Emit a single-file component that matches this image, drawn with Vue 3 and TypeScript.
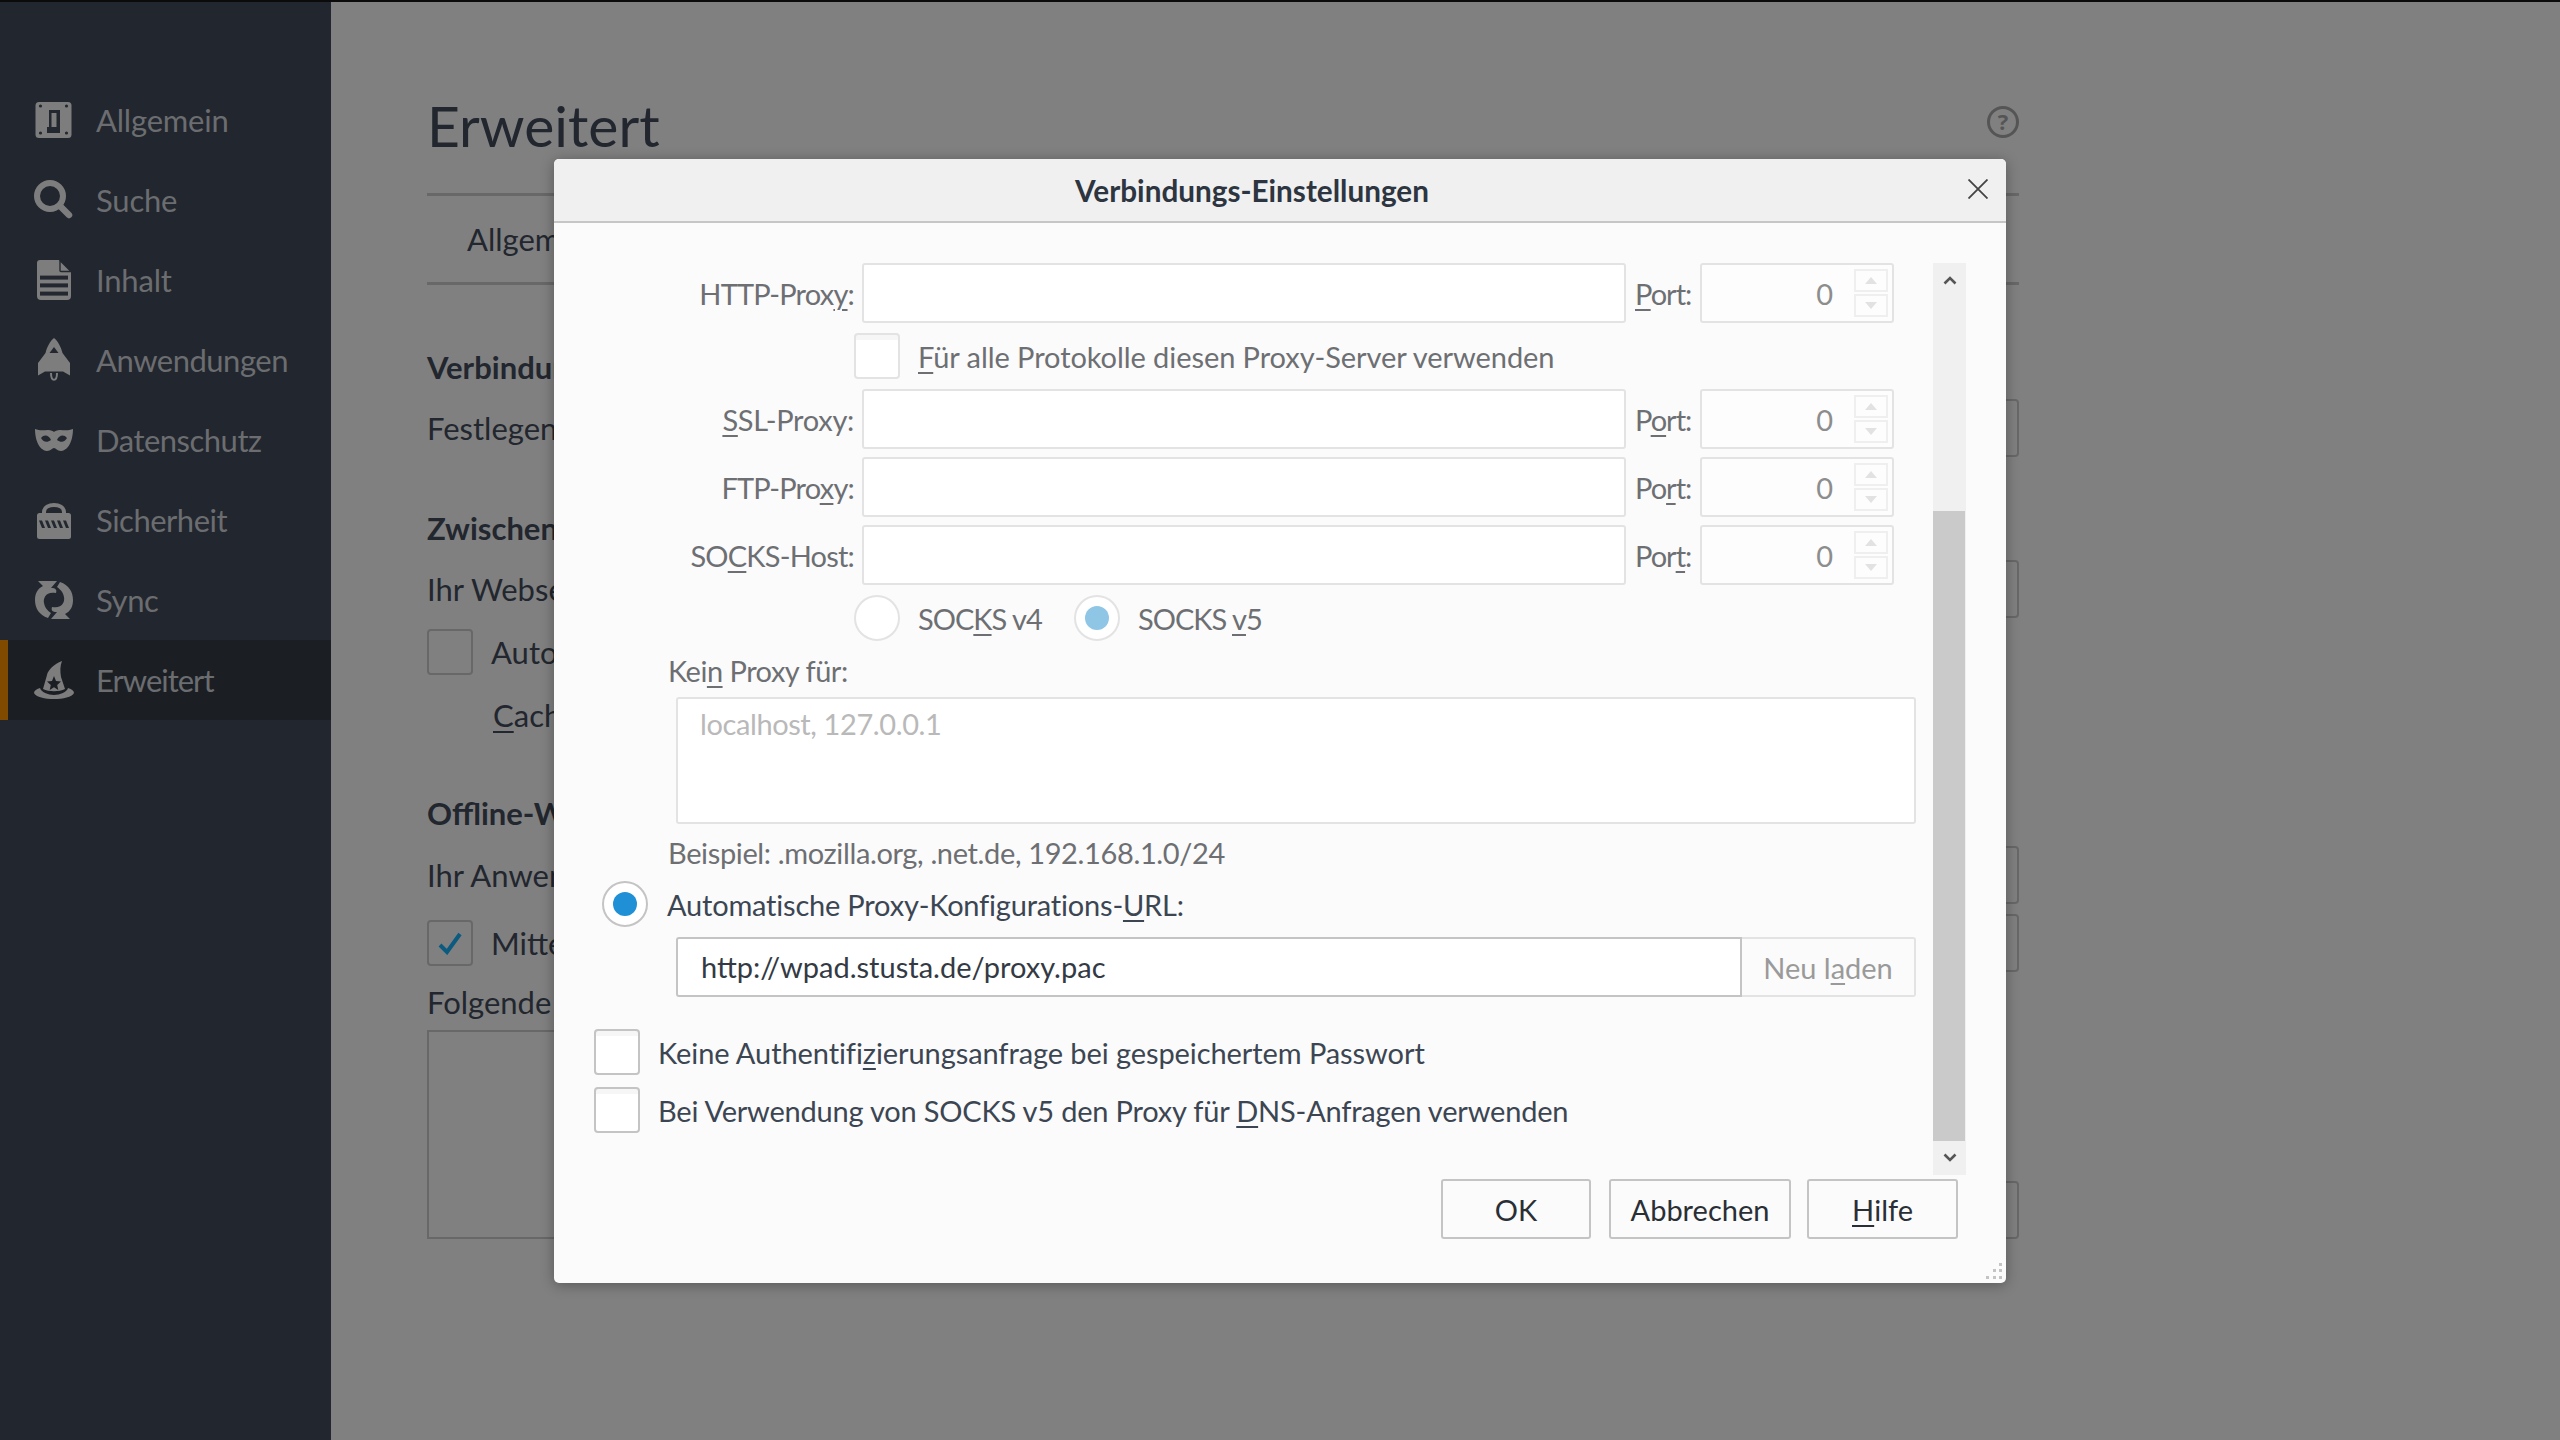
<script setup lang="ts">
const nav: { id: string; label: string; active?: boolean }[] = [
  { id: 'general', label: 'Allgemein' },
  { id: 'search', label: 'Suche' },
  { id: 'content', label: 'Inhalt' },
  { id: 'apps', label: 'Anwendungen' },
  { id: 'privacy', label: 'Datenschutz' },
  { id: 'security', label: 'Sicherheit' },
  { id: 'sync', label: 'Sync' },
  { id: 'advanced', label: 'Erweitert', active: true },
]
</script>

<template>
  <div class="page">
    <aside class="sidebar">
      <div v-for="n in nav" :key="n.id" class="nav" :class="[n.id, { active: n.active }]">
        <svg class="nav-icon" viewBox="0 0 40 40" width="40" height="40">
          <template v-if="n.id === 'general'">
            <rect x="1.5" y="2" width="36" height="36" rx="3.5" fill="#7d7d7d" />
            <g fill="#23272f"><circle cx="6.5" cy="6" r="1.6" /><circle cx="32.5" cy="6" r="1.6" /><circle cx="6.5" cy="33" r="1.6" /><circle cx="32.5" cy="33" r="1.6" /></g>
            <path d="M13 10H26V33H13V27H15V10Z" fill="#23272f" />
            <rect x="17.5" y="13" width="5" height="14" fill="#7d7d7d" />
          </template>
          <template v-else-if="n.id === 'search'">
            <circle cx="16" cy="16" r="13" fill="none" stroke="#7d7d7d" stroke-width="6" />
            <path d="M26 26L35 35" fill="none" stroke="#7d7d7d" stroke-width="6.5" stroke-linecap="round" />
          </template>
          <template v-else-if="n.id === 'content'">
            <path d="M6 0H25L37 12V36Q37 40 33 40H7Q3 40 3 36V3Q3 0 6 0Z" fill="#7d7d7d" />
            <path d="M26 0.5L37 11.5H27Q26 11.5 26 10.5Z" fill="#7d7d7d" stroke="#23272f" stroke-width="1.4" />
            <g fill="#23272f"><rect x="6" y="15.6" width="28" height="4" /><rect x="6" y="23.4" width="28" height="4" /><rect x="6" y="31.6" width="28" height="4" /></g>
          </template>
          <template v-else-if="n.id === 'apps'">
            <path d="M20 -2C24 1 27 7 28.500 13L36 23V35.500L29 31.500H11L4 35.500V23L11.500 13C13 7 16 1 20 -2Z" fill="#7d7d7d" />
            <path d="M20 7L24.500 13H15.500Z" fill="#23272f" />
            <path d="M17 33C17 42 23 42 23 33" fill="none" stroke="#7d7d7d" stroke-width="2" />
          </template>
          <template v-else-if="n.id === 'privacy'">
            <path d="M1 9C6 11 10 10 14 10C17 10 19 11 20 12C21 11 23 10 26 10C30 10 34 11 39 9C39 18 36 30 27 31C23 31 22 28 20 28C18 28 17 31 13 31C4 30 1 18 1 9Z" fill="#7d7d7d" />
            <path d="M7 18C10 14 15 15 17 20C13 23 9 22 7 18ZM33 18C30 14 25 15 23 20C27 23 31 22 33 18Z" fill="#23272f" />
          </template>
          <template v-else-if="n.id === 'security'">
            <path d="M10 15V12C10 2.500 30 2.500 30 12V15" fill="none" stroke="#7d7d7d" stroke-width="4" />
            <rect x="3" y="13" width="34" height="26" rx="2.500" fill="#7d7d7d" />
            <g fill="#23272f"><path d="M5 20.500H8L11 28H8Z" /><path d="M11 20.500H14L17 28H14Z" /><path d="M17 20.500H20L23 28H20Z" /><path d="M23 20.500H26L29 28H26Z" /><path d="M29 20.500H32L35 28H32Z" /></g>
          </template>
          <template v-else-if="n.id === 'sync'">
            <g fill="#7d7d7d">
              <path d="M4 1H23L17 8C22 8 23 10 22 13C12 11 9 18 10 23C11 28 13 30 17 33L14 38C5 35 1 28 1 20C1 14 3 9 9 6Z" />
              <path d="M4 1H23L17 8C22 8 23 10 22 13C12 11 9 18 10 23C11 28 13 30 17 33L14 38C5 35 1 28 1 20C1 14 3 9 9 6Z" transform="rotate(180 20 20)" />
            </g>
          </template>
          <template v-else>
            <path d="M28 1C20 4 14 10 13 15L9 29C15 32 25 32 31 29L27 17C26 11 26 6 28 1Z" fill="#7d7d7d" />
            <path d="M6 28C2 29 0 31 0 33C2 37 11 39 20 39C29 39 38 37 40 33C40 31 38 29 34 28C33 32 26 35 20 35C14 35 7 32 6 28Z" fill="#7d7d7d" />
            <path d="M20 16L22 21L27 21.500L23.200 25L24.300 30L20 27.300L15.700 30L16.800 25L13 21.500L18 21Z" fill="#1b1f24" />
          </template>
        </svg>
        <span>{{ n.label }}</span>
      </div>
    </aside>

    <main class="main">
      <div class="h-row">
        <h1>Erweitert</h1>
        <svg class="help" viewBox="0 0 32 32" width="32" height="32"><circle cx="16" cy="16" r="14.500" fill="none" stroke="#555" stroke-width="3" /><text x="16" y="23.500" text-anchor="middle" class="help-q">?</text></svg>
      </div>
      <div class="tabs"><span>Allgemein</span></div>
      <div class="bg-row m52 bold">Verbindung</div>
      <div class="bg-row m1"><span>Festlegen, wie Firefox</span><i class="bg-btn"></i></div>
      <div class="bg-row m40 bold">Zwischenspeicher</div>
      <div class="bg-row m1"><span>Ihr Webseiten-Cache</span><i class="bg-btn"></i></div>
      <div class="bg-row m3 left"><i class="bg-check"></i><span>Automatisch</span></div>
      <div class="bg-row m3 indent"><span><u>C</u>ache</span></div>
      <div class="bg-row m38 bold">Offline-Webinhalte</div>
      <div class="bg-row m2"><span>Ihr Anwendungscache</span><i class="bg-btn"></i></div>
      <div class="bg-row m8 left2">
        <span class="left-inner">
          <i class="bg-check"><svg viewBox="0 0 24 24" width="24" height="24"><path d="M2 14L9 21L22 3" fill="none" stroke="#0b5a80" stroke-width="4" /></svg></i>
          <span>Mitteilen</span>
        </span>
        <i class="bg-btn"></i>
      </div>
      <div class="bg-label">Folgende Websites</div>
      <div class="bg-area"><i class="bg-box"></i><i class="bg-btn"></i></div>
    </main>

    <section class="dialog">
      <header class="titlebar">
        <span class="title">Verbindungs-Einstellungen</span>
        <svg class="close" viewBox="0 0 20 20" width="20" height="20"><path d="M0.500 0.500L19.500 19.500M19.500 0.500L0.500 19.500" stroke="#444" stroke-width="1.800" /></svg>
      </header>

      <div class="body">
        <div class="scroll-content">
          <div class="proxy-row">
            <label class="lbl">HTTP-Prox<u>y</u>:</label>
            <div class="inp"></div>
            <label class="port-lbl"><u>P</u>ort:</label>
            <div class="port"><span>0</span><span class="spin"><i class="up"></i><i class="down"></i></span></div>
          </div>
          <div class="opt-row m10">
            <i class="check"></i>
            <span class="dis all-proto"><u>F</u>ür alle Protokolle diesen Proxy-Server verwenden</span>
          </div>
          <div class="proxy-row m10">
            <label class="lbl ssl"><u>S</u>SL-Proxy:</label>
            <div class="inp"></div>
            <label class="port-lbl">P<u>o</u>rt:</label>
            <div class="port"><span>0</span><span class="spin"><i class="up"></i><i class="down"></i></span></div>
          </div>
          <div class="proxy-row m8">
            <label class="lbl">FTP-Pro<u>x</u>y:</label>
            <div class="inp"></div>
            <label class="port-lbl">Po<u>r</u>t:</label>
            <div class="port"><span>0</span><span class="spin"><i class="up"></i><i class="down"></i></span></div>
          </div>
          <div class="proxy-row m8">
            <label class="lbl">SO<u>C</u>KS-Host:</label>
            <div class="inp"></div>
            <label class="port-lbl">Por<u>t</u>:</label>
            <div class="port"><span>0</span><span class="spin"><i class="up"></i><i class="down"></i></span></div>
          </div>
          <div class="opt-row m10">
            <i class="radio"></i>
            <span class="dis socks socks4">SOC<u>K</u>S v4</span>
            <i class="radio on"></i>
            <span class="dis socks">SOCKS <u>v</u>5</span>
          </div>
          <div class="block-lbl dis">Kei<u>n</u> Proxy für:</div>
          <div class="noproxy">localhost, 127.0.0.1</div>
          <div class="block-lbl ex dis">Beispiel: .mozilla.org, .net.de, 192.168.1.0/24</div>
          <div class="auto-row">
            <i class="radio enabled on"></i>
            <span class="txt auto-txt">Automatische Proxy-Konfigurations-<u>U</u>RL:</span>
          </div>
          <div class="url-row">
            <div class="url">http://wpad.stusta.de/proxy.pac</div>
            <div class="reload">Neu l<u>a</u>den</div>
          </div>
          <div class="cb-row m32"><i class="check enabled"></i><span class="txt tight1">Keine Authentifi<u>z</u>ierungsanfrage bei gespeichertem Passwort</span></div>
          <div class="cb-row m12"><i class="check enabled"></i><span class="txt tight2">Bei Verwendung von SOCKS v5 den Proxy für <u>D</u>NS-Anfragen verwenden</span></div>
        </div>
        <div class="scrollbar">
          <div class="sb-btn"><svg viewBox="0 0 14 10" width="14" height="10"><path d="M1.500 8.500L7 3L12.500 8.500" fill="none" stroke="#555" stroke-width="2.600" /></svg></div>
          <div class="sb-track"><div class="sb-thumb"></div></div>
          <div class="sb-btn"><svg viewBox="0 0 14 10" width="14" height="10"><path d="M1.500 1.500L7 7L12.500 1.500" fill="none" stroke="#555" stroke-width="2.600" /></svg></div>
        </div>
      </div>

      <footer class="buttons">
        <div class="btn w150 ok">OK</div>
        <div class="btn w182">Abbrechen</div>
        <div class="btn w151"><u>H</u>ilfe</div>
      </footer>
      <svg class="grip" viewBox="0 0 16 16" width="16" height="16"><g fill="#c4c4c4"><rect x="13" y="0" width="3" height="3" /><rect x="7" y="6" width="3" height="3" /><rect x="13" y="6" width="3" height="3" /><rect x="0" y="13" width="3" height="3" /><rect x="7" y="13" width="3" height="3" /><rect x="13" y="13" width="3" height="3" /></g></svg>
    </section>
  </div>
</template>

<style>
html, body { margin: 0; padding: 0; background: #808080; }
</style>

<style scoped>
.page {
  position: relative;
  width: 2560px;
  height: 1440px;
  overflow: hidden;
  display: flex;
  background: #808080;
  font-family: "Lato", "Open Sans", sans-serif;
  color: #22262e;
}
.page::before {
  content: "";
  position: absolute;
  left: 0;
  top: 0;
  width: 100%;
  height: 2px;
  background: #0b0b0b;
  z-index: 1;
}
u { text-underline-offset: 4px; text-decoration-thickness: 2px; }
i { font-style: normal; display: block; }

.sidebar {
  width: 331px;
  flex: none;
  padding-top: 80px;
  box-sizing: border-box;
  background: #22262e;
}
.nav {
  height: 80px;
  display: flex;
  align-items: center;
  padding-left: 34px;
  gap: 22px;
  font-size: 31px;
  letter-spacing: -0.5px;
  color: #6b6d70;
  box-sizing: border-box;
}
.nav.general, .nav.search, .nav.content { letter-spacing: -0.2px; }
.nav.sync { letter-spacing: -0.4px; }
.nav.advanced { letter-spacing: -1px; }
.nav.active {
  background: #1b1f24;
  border-left: 8px solid #804a00;
  padding-left: 26px;
}
.nav-icon { flex: none; overflow: visible; }

.main {
  width: 1592px;
  margin-left: 96px;
  flex: none;
}
.h-row {
  height: 193px;
  box-sizing: border-box;
  padding-top: 84px;
  display: flex;
  justify-content: space-between;
}
h1 {
  margin: 0;
  font-size: 57px;
  font-weight: 400;
  line-height: 82px;
}
.help { margin: 22px 0 0 0; }
.help-q { font-family: "Open Sans", sans-serif; font-size: 22px; font-weight: 700; fill: #555; }
.tabs {
  height: 92px;
  box-sizing: border-box;
  border-top: 3px solid #686868;
  border-bottom: 3px solid #686868;
  padding-left: 40px;
  display: flex;
  align-items: center;
  font-size: 31px;
}
.bg-row {
  height: 60px;
  display: flex;
  align-items: center;
  justify-content: space-between;
  font-size: 31px;
}
.bold { font-weight: 700; }
.m52 { margin-top: 52px; }
.m1 { margin-top: 1px; }
.m40 { margin-top: 40px; }
.m3 { margin-top: 3px; }
.m38 { margin-top: 38px; }
.m2 { margin-top: 2px; }
.left { justify-content: flex-start; gap: 18px; }
.indent { justify-content: flex-start; padding-left: 66px; }
.left-inner { display: flex; align-items: center; gap: 18px; }
.bg-btn {
  width: 120px;
  height: 58px;
  box-sizing: border-box;
  border: 2px solid #686868;
  border-radius: 4px;
}
.bg-check {
  width: 46px;
  height: 46px;
  box-sizing: border-box;
  border: 2px solid #686868;
  border-radius: 4px;
  display: flex;
  align-items: center;
  justify-content: center;
}
.bg-label { height: 57px; line-height: 58px; font-size: 31px; }
.bg-area {
  height: 209px;
  display: flex;
  justify-content: space-between;
  align-items: flex-end;
}
.bg-box {
  width: 1100px;
  height: 209px;
  box-sizing: border-box;
  border: 2px solid #686868;
}

.dialog {
  position: absolute;
  left: 554px;
  top: 159px;
  width: 1452px;
  height: 1124px;
  background: #fbfbfb;
  border-radius: 5px;
  box-shadow: 0 2px 14px rgba(0, 0, 0, 0.32);
  display: flex;
  flex-direction: column;
  overflow: hidden;
  z-index: 2;
}
.titlebar {
  height: 64px;
  flex: none;
  box-sizing: border-box;
  background: #f0f0f0;
  border-bottom: 2px solid #c6c6c6;
  padding: 1px 56px 0 0;
  display: flex;
  align-items: center;
  justify-content: center;
  position: relative;
}
.title { font-size: 29.700px; font-weight: 700; color: #2d3540; }
.close { position: absolute; right: 18px; top: 20px; }

.body {
  flex: none;
  display: flex;
  padding: 40px 40px 0 40px;
  gap: 18px;
  height: 912px;
}
.scroll-content {
  width: 1321px;
  flex: none;
  font-size: 29px;
  color: #6d6f73;
}
.proxy-row { display: flex; height: 60px; align-items: center; }
.m10 { margin-top: 10px; }
.m8 { margin-top: 8px; }
.m32 { margin-top: 32px; }
.m12 { margin-top: 12px; }
.lbl { width: 260px; text-align: right; flex: none; margin-right: 8px; letter-spacing: -0.8px; }
.lbl.ssl { letter-spacing: -0.3px; }
.inp {
  width: 764px;
  height: 60px;
  box-sizing: border-box;
  background: #fff;
  border: 2px solid #e3e3e3;
  border-radius: 3px;
  flex: none;
}
.port-lbl { width: 74px; flex: none; padding-left: 9px; box-sizing: border-box; letter-spacing: -1px; }
.port {
  width: 194px;
  height: 60px;
  box-sizing: border-box;
  border: 2px solid #e3e3e3;
  border-radius: 3px;
  display: flex;
  align-items: center;
  justify-content: flex-end;
  padding-right: 4px;
  color: #8d8d8d;
  flex: none;
  background: #fdfdfd;
}
.spin {
  width: 34px;
  height: 48px;
  margin-left: 21px;
  display: flex;
  flex-direction: column;
  gap: 2px;
}
.spin i {
  flex: 1;
  box-sizing: border-box;
  border: 2px solid #efefef;
  position: relative;
}
.spin i::after {
  content: "";
  position: absolute;
  left: 50%;
  top: 50%;
  margin: -4px 0 0 -6px;
  border-left: 6px solid transparent;
  border-right: 6px solid transparent;
}
.spin .up::after { border-bottom: 7px solid #e2e2e2; }
.spin .down::after { border-top: 7px solid #e2e2e2; }

.opt-row { height: 46px; display: flex; align-items: center; padding-left: 260px; }
.all-proto { letter-spacing: -0.07px; }
.check {
  width: 46px;
  height: 46px;
  flex: none;
  box-sizing: border-box;
  background: linear-gradient(#f6f6f6 0 5px, #fff 5px);
  border: 2px solid #e3e3e3;
  border-radius: 4px;
  margin-right: 18px;
}
.check.enabled { border-color: #c4c4c4; }
.radio {
  width: 46px;
  height: 46px;
  flex: none;
  box-sizing: border-box;
  background: #fff;
  border: 2px solid #e3e3e3;
  border-radius: 50%;
  margin-right: 18px;
  position: relative;
}
.radio.enabled { border-color: #c4c4c4; }
.radio.on::after {
  content: "";
  position: absolute;
  left: 9px;
  top: 9px;
  width: 24px;
  height: 24px;
  border-radius: 50%;
  background: #8fc6e6;
}
.radio.enabled.on::after { background: #2090d6; }
.socks { letter-spacing: -1px; }
.socks4 { width: 138px; margin-right: 18px; flex: none; }
.dis { color: #6d6f73; }
.block-lbl { height: 46px; line-height: 40px; margin-top: 10px; padding-left: 74px; letter-spacing: -0.5px; }
.noproxy {
  margin-left: 82px;
  width: 1240px;
  height: 127px;
  box-sizing: border-box;
  background: #fff;
  border: 2px solid #e3e3e3;
  border-radius: 3px;
  padding: 7px 22px;
  color: #b9b9b9;
  letter-spacing: -0.4px;
}
.block-lbl.ex { margin-top: 6px; height: 51px; line-height: 46px; letter-spacing: -0.36px; }
.auto-row { height: 46px; display: flex; align-items: center; padding-left: 8px; }
.auto-row .radio { margin-right: 19px; }
.auto-txt { letter-spacing: -0.2px; }
.txt { color: #3c4653; }
.url-row { display: flex; margin: 10px 0 0 82px; height: 60px; }
.url {
  width: 1066px;
  flex: none;
  box-sizing: border-box;
  background: #fff;
  border: 2px solid #c4c4c4;
  border-radius: 3px 0 0 3px;
  padding-left: 23px;
  line-height: 56px;
  color: #333a44;
}
.reload {
  width: 174px;
  flex: none;
  box-sizing: border-box;
  border: 2px solid #e3e3e3;
  border-left: 0;
  border-radius: 0 3px 3px 0;
  display: flex;
  align-items: center;
  justify-content: center;
  color: #9a9a9a;
}
.cb-row { height: 46px; display: flex; align-items: center; }
.cb-row .check { margin-right: 18px; }
.tight1 { letter-spacing: -0.08px; }
.tight2 { letter-spacing: -0.2px; }

.scrollbar {
  width: 33px;
  flex: none;
  background: #f0f0f0;
  display: flex;
  flex-direction: column;
}
.sb-btn {
  height: 34px;
  flex: none;
  display: flex;
  align-items: center;
  justify-content: center;
}
.sb-track { flex: 1; display: flex; flex-direction: column; justify-content: flex-end; }
.sb-thumb { height: 630px; width: 32px; background: #cacaca; }

.buttons {
  flex: none;
  display: flex;
  justify-content: flex-end;
  gap: 16px;
  padding: 4px 48px 0 0;
}
.btn {
  height: 60px;
  box-sizing: border-box;
  border: 2px solid #c4c4c4;
  border-radius: 3px;
  display: flex;
  align-items: center;
  justify-content: center;
  font-size: 29px;
  color: #2a2f36;
}
.w150 { width: 150px; }
.w151 { width: 151px; }
.w182 { width: 182px; }
.ok { margin-right: 2px; }
.grip { position: absolute; right: 4px; bottom: 4px; }
</style>
